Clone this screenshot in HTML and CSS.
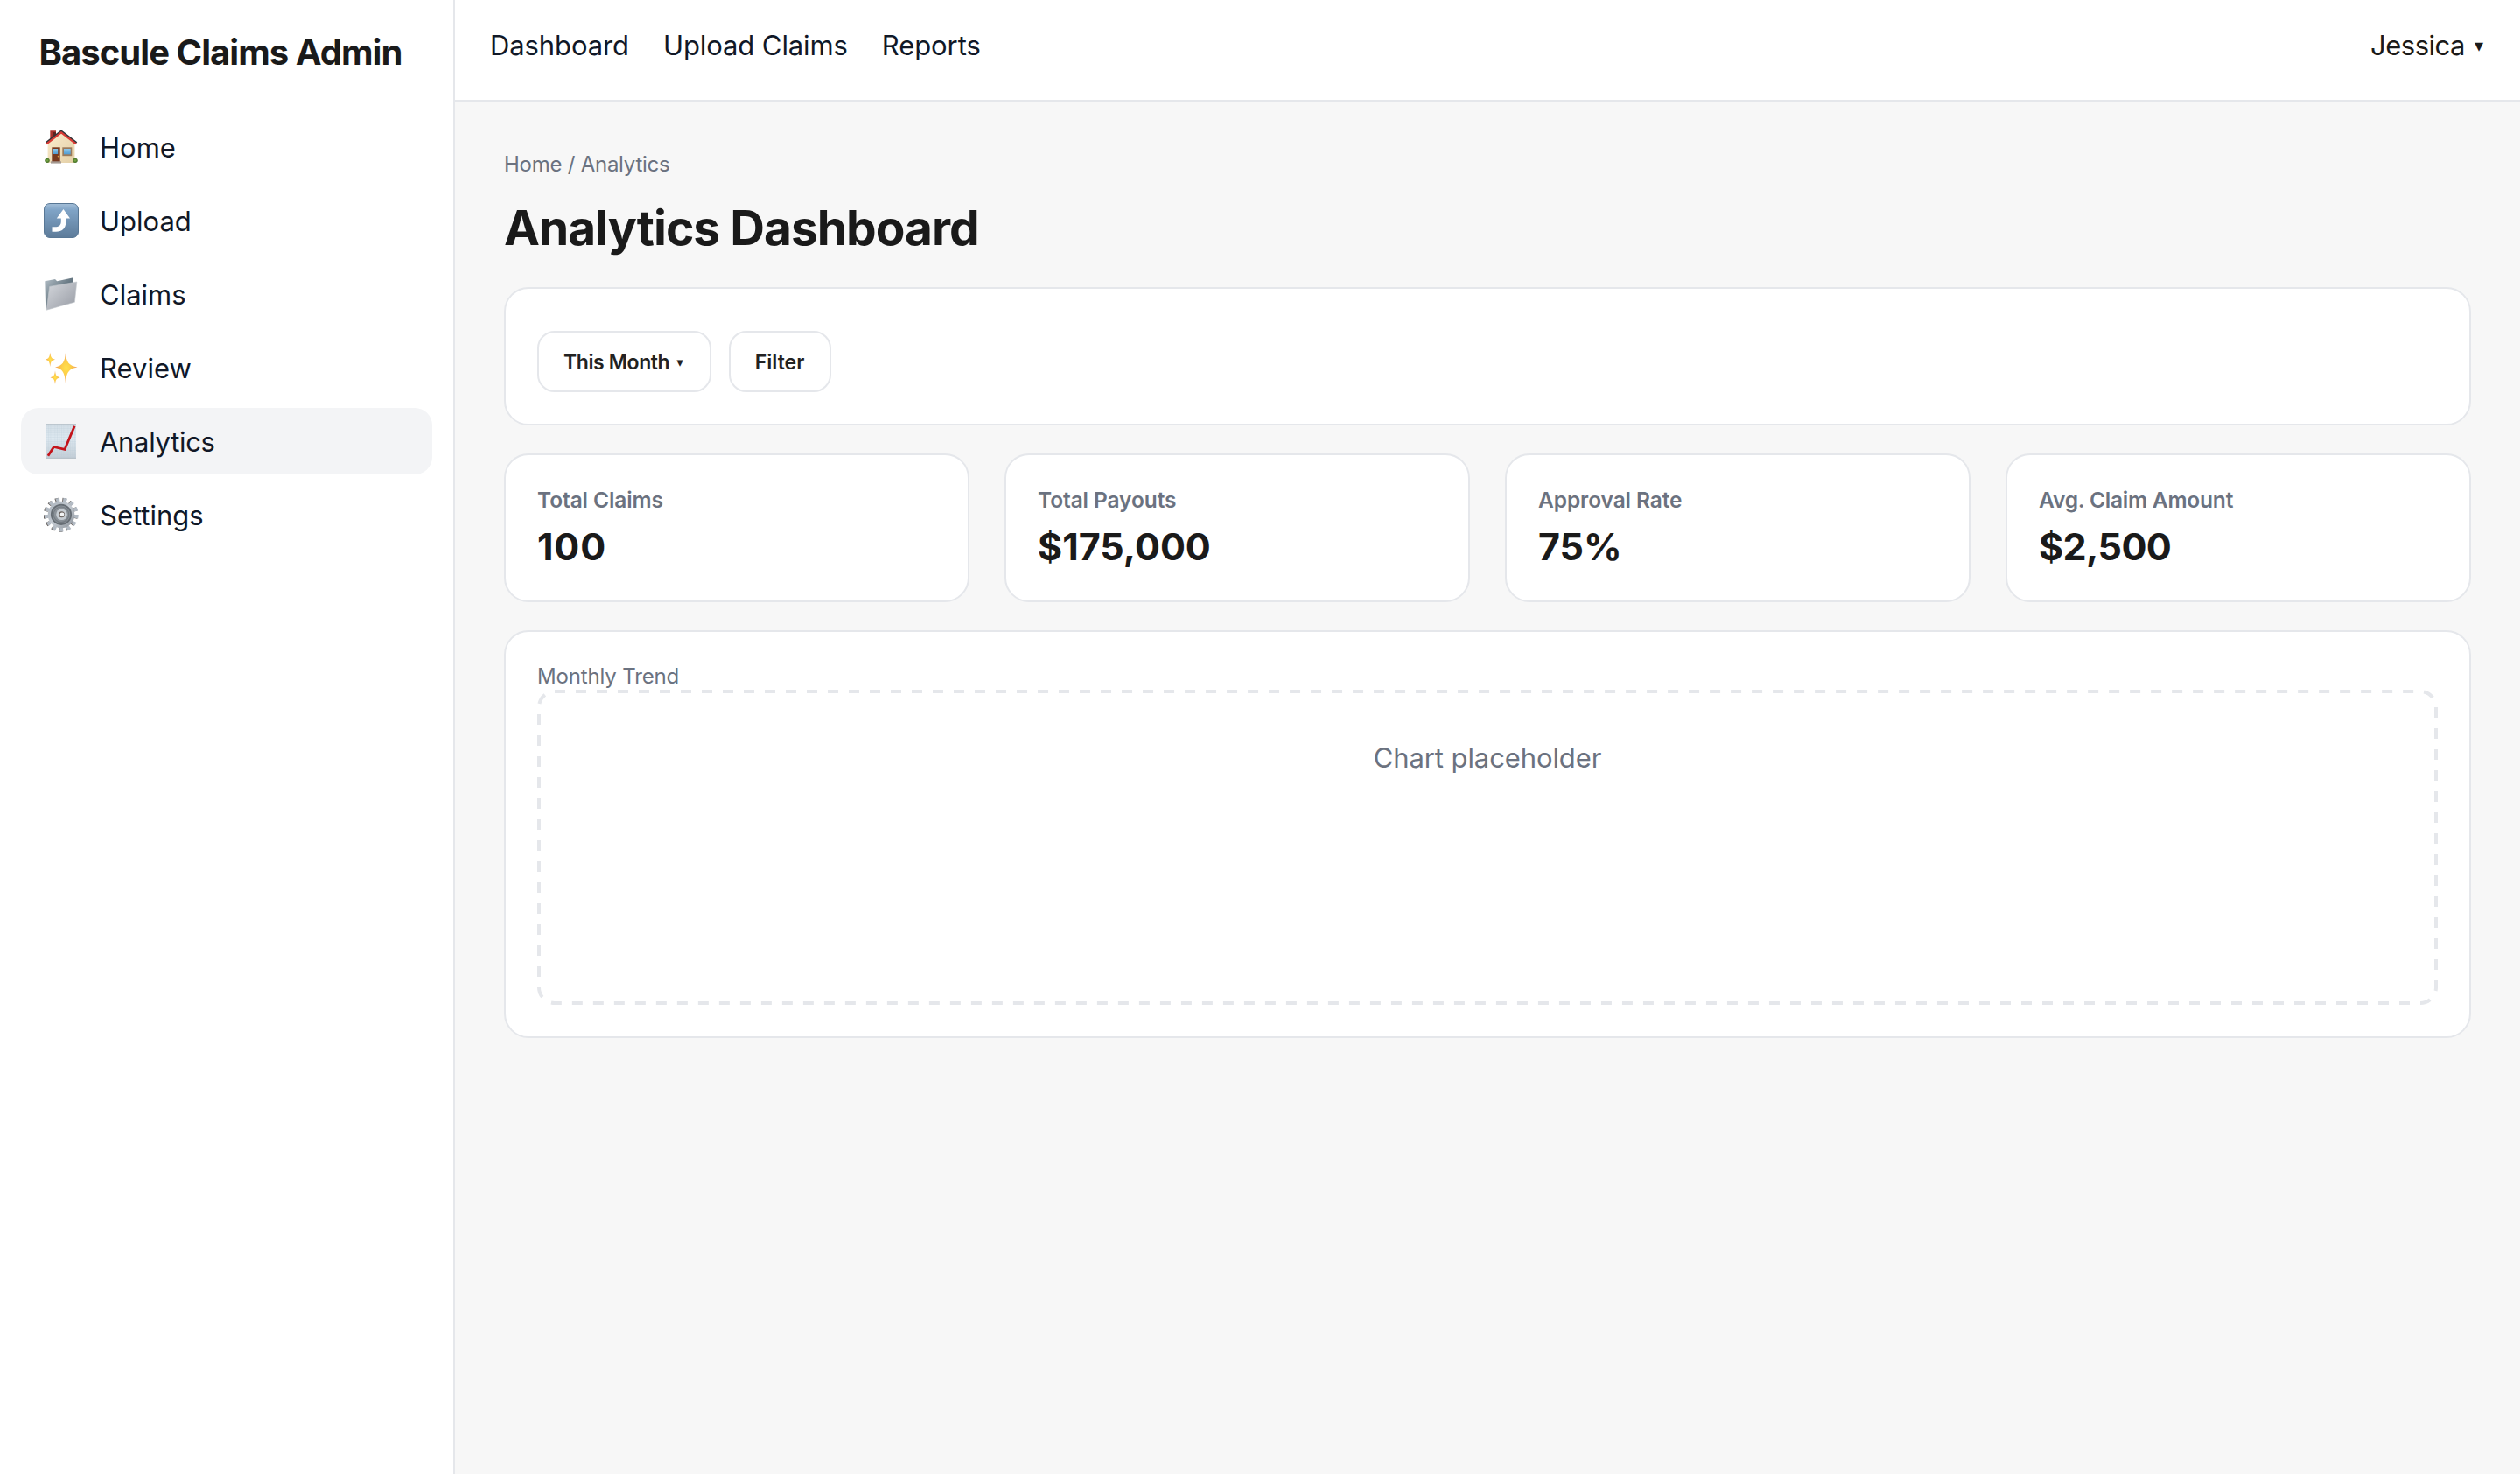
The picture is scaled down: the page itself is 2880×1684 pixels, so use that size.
FILE: index.html
```html
<!DOCTYPE html>
<html lang="en">
<head>
<meta charset="utf-8">
<title>Bascule Claims Admin</title>
<link rel="stylesheet" href="styles.css">
</head>
<body>
<div class="app">
  <aside class="sidebar">
    <div class="brand">Bascule Claims Admin</div>
    <nav class="side-nav">
      <a class="nav-item">
        <svg class="icon" viewBox="0 0 40 40">
          <defs>
            <linearGradient id="wall" x1="0" y1="0" x2="1" y2="1"><stop offset="0" stop-color="#fbeccd"/><stop offset="1" stop-color="#e3cfa6"/></linearGradient>
            <linearGradient id="pane" x1="0" y1="0" x2="0" y2="1"><stop offset="0" stop-color="#8cc8ec"/><stop offset="1" stop-color="#4f9bd2"/></linearGradient>
            <radialGradient id="bush"><stop offset="0" stop-color="#7fae4a"/><stop offset="1" stop-color="#3f6b22"/></radialGradient>
          </defs>
          <path d="M7.3 1.3H14V8L7.3 13.5Z" fill="#a8322b"/><path d="M10.5 3H14V8L9 12Z" fill="#5d2320"/>
          <path d="M4.6 14.5 20 3 35.4 14.5V38H4.6Z" fill="url(#wall)"/>
          <ellipse cx="4" cy="35.3" rx="2.7" ry="2.6" fill="url(#bush)"/><ellipse cx="36" cy="35.3" rx="2.7" ry="2.6" fill="url(#bush)"/>
          <path d="M2.7 15.3 20 1.7 37.5 15.3" fill="none" stroke="#30363b" stroke-width="2.4"/>
          <path d="M3.2 16.3 20 3.3 36.9 16.3" fill="none" stroke="#d93b35" stroke-width="2.2"/>
          <path d="M9.3 20.3H18.7V37H9.3Z" fill="#77391f"/><path d="M11 22H16.2V28H11Z" fill="url(#pane)"/><circle cx="16.6" cy="30.6" r=".9" fill="#dd9a3c"/>
          <path d="M8 36.3H20V38.6H8Z" fill="#a59a92"/>
          <path d="M21.3 20.3H32.3V30.2H21.3Z" fill="#9b7b5c"/><path d="M23 22H30.7V28.3H23Z" fill="url(#pane)"/>
        </svg>
        <span>Home</span>
      </a>
      <a class="nav-item">
        <svg class="icon" viewBox="0 0 40 40">
          <defs><linearGradient id="tile" x1="0" y1="0" x2="0" y2="1"><stop offset="0" stop-color="#a4bfd8"/><stop offset=".2" stop-color="#7fa3c6"/><stop offset="1" stop-color="#5d7b99"/></linearGradient></defs>
          <rect x=".5" y=".5" width="39" height="39" rx="6.5" fill="url(#tile)" stroke="#587795"/>
          <path d="M22.5 7 30 17.5H25.3V21.5C25.3 29 21 32.7 14 32.7H9.5V27.3H13C17.5 27.3 19.8 25 19.8 21V17.5H14.8Z" fill="#fff"/>
        </svg>
        <span>Upload</span>
      </a>
      <a class="nav-item">
        <svg class="icon" viewBox="0 0 40 40">
          <defs>
            <linearGradient id="front" x1="0" y1="0" x2="1" y2="1"><stop offset="0" stop-color="#d5d8dd"/><stop offset="1" stop-color="#969aa3"/></linearGradient>
            <linearGradient id="back" x1="0" y1="0" x2="1" y2="1"><stop offset="0" stop-color="#b6c1c9"/><stop offset=".5" stop-color="#667782"/><stop offset="1" stop-color="#46545e"/></linearGradient>
          </defs>
          <path d="M1.3 5.2 13 3 15.2 5.2 33.8 1.3V9L6 30 3 38 2.2 37.3Z" fill="url(#back)"/>
          <path d="M6.7 11.4 37.8 6 35.4 29.2 3.2 38.2Z" fill="url(#front)" stroke="#c3c7cd" stroke-width=".6"/>
        </svg>
        <span>Claims</span>
      </a>
      <a class="nav-item">
        <svg class="icon" viewBox="0 0 40 40">
          <defs><radialGradient id="spark"><stop offset="0" stop-color="#ffe14d"/><stop offset=".4" stop-color="#fdcf48"/><stop offset="1" stop-color="#ee9c5d"/></radialGradient></defs>
          <path d="M25 3C26 14 28.500 17.500 38.500 19.500C28.500 21.500 26 25 25 38C24 25 21.500 21.500 13 19.500C21.500 17.500 24 14 25 3Z" fill="url(#spark)"/>
          <path d="M7.300 2.500C7.900 8.200 8.800 9.700 13 10.700C8.800 11.700 7.900 13.200 7.300 19C6.700 13.200 5.800 11.700 2 10.700C5.800 9.700 6.700 8.200 7.300 2.500Z" fill="url(#spark)"/>
          <path d="M13 23.500C13.600 28.800 14.600 30.200 18.500 31.200C14.600 32.200 13.600 33.600 13 39C12.400 33.600 11.400 32.200 7.500 31.200C11.400 30.200 12.400 28.800 13 23.500Z" fill="url(#spark)"/>
        </svg>
        <span>Review</span>
      </a>
      <a class="nav-item active">
        <svg class="icon" viewBox="0 0 40 40">
          <defs>
            <linearGradient id="sheet" x1="0" y1="0" x2="0" y2="1"><stop offset="0" stop-color="#d3dee6"/><stop offset=".4" stop-color="#dde8f0"/><stop offset="1" stop-color="#c3cdd6"/></linearGradient>
            <pattern id="grid" width="2.500" height="2.500" patternUnits="userSpaceOnUse"><path d="M0 0H2.500M0 0V2.500" stroke="#b9cbd8" stroke-width=".4"/></pattern>
          </defs>
          <path d="M3 .3H37V39.800H3Z" fill="url(#sheet)"/><path d="M3 .3H37V39.800H3Z" fill="url(#grid)"/>
          <path d="M3 .8H37M3 39.300H37" stroke="#b3bdc5"/>
          <path d="M4.900 36.700 11.500 26.500 24 29.400 35.200 2.800" fill="none" stroke="#c4141b" stroke-width="2.800"/>
        </svg>
        <span>Analytics</span>
      </a>
      <a class="nav-item">
        <svg class="icon" viewBox="0 0 40 40">
          <defs><linearGradient id="steel" x1="0" y1="0" x2="1" y2="1"><stop offset="0" stop-color="#a9b2bb"/><stop offset=".5" stop-color="#c3c9d0"/><stop offset="1" stop-color="#888f97"/></linearGradient></defs>
          <circle cx="19.300" cy="20.200" r="17.300" fill="none" stroke="#66605c" stroke-width="4.600" pathLength="26" stroke-dasharray="1 1"/>
          <circle cx="20.200" cy="20" r="17.200" fill="none" stroke="#b3bbc4" stroke-width="4.600" pathLength="26" stroke-dasharray="1 1"/>
          <circle cx="20" cy="20" r="15.300" fill="url(#steel)"/>
          <circle cx="20" cy="19.800" r="11.200" fill="#8b9299" stroke="#666d74" stroke-width="1.800"/>
          <circle cx="20" cy="19.800" r="8.800" fill="none" stroke="#747b82" stroke-width="1.200"/>
          <circle cx="20.500" cy="19.800" r="6.300" fill="#c6ccd2"/>
          <circle cx="20.500" cy="19.800" r="3.500" fill="#6a625e"/>
          <circle cx="21" cy="19.800" r="2.400" fill="#f3f4f5"/>
        </svg>
        <span>Settings</span>
      </a>
    </nav>
  </aside>
  <div class="content">
    <header class="topbar">
      <nav class="top-links"><a>Dashboard</a><a>Upload Claims</a><a>Reports</a></nav>
      <div class="user">Jessica<span class="caret">▾</span></div>
    </header>
    <main class="page">
      <div class="breadcrumb">Home / Analytics</div>
      <h1 class="title">Analytics Dashboard</h1>
      <section class="card filters">
        <button class="btn month">This Month<span class="caret">▾</span></button>
        <button class="btn">Filter</button>
      </section>
      <section class="stats">
        <div class="card stat"><div class="stat-label">Total Claims</div><div class="stat-value loose">100</div></div>
        <div class="card stat"><div class="stat-label">Total Payouts</div><div class="stat-value">$175,000</div></div>
        <div class="card stat"><div class="stat-label">Approval Rate</div><div class="stat-value">75%</div></div>
        <div class="card stat"><div class="stat-label long">Avg. Claim Amount</div><div class="stat-value tight">$2,500</div></div>
      </section>
      <section class="card trend">
        <div class="trend-label">Monthly Trend</div>
        <div class="chart">
          <svg class="chart-outline" viewBox="0 0 2172 360"><rect x="2" y="2" width="2168" height="356" rx="18" pathLength="418"/></svg>
          Chart placeholder
        </div>
      </section>
    </main>
  </div>
</div>
</body>
</html>
```
FILE: styles.css
```css
* { box-sizing: border-box; }

body {
  margin: 0;
  background: #f7f7f7;
  color: #1a1a1a;
  font-family: Inter, "Liberation Sans", sans-serif;
  font-size: 31px;
}

.app {
  display: grid;
  grid-template-columns: 520px 1fr;
  min-height: 100vh;
}

/* Sidebar */
.sidebar {
  background: #fff;
  border-right: 2px solid #e5e7eb;
  padding: 35px 24px;
}

.brand {
  padding-left: 20.5px;
  margin-bottom: 46px;
  font-size: 40px;
  font-weight: 700;
  line-height: 49px;
  letter-spacing: -0.95px;
  white-space: nowrap;
}

.side-nav {
  display: flex;
  flex-direction: column;
  gap: 8px;
}

.nav-item {
  display: flex;
  align-items: center;
  gap: 24px;
  height: 76px;
  padding: 0 26px;
  border-radius: 20px;
  color: #111827;
  line-height: 77px;
}

.nav-item.active {
  background: #f3f4f6;
  letter-spacing: -0.3px;
}

.icon {
  width: 40px;
  height: 40px;
}

/* Top bar */
.topbar {
  display: flex;
  justify-content: space-between;
  height: 116px;
  padding: 28px 42px 0 40px;
  background: #fff;
  border-bottom: 2px solid #e5e7eb;
  line-height: 47px;
}

.top-links {
  display: flex;
  gap: 39px;
  color: #111827;
  letter-spacing: -0.1px;
}

.user { letter-spacing: -0.5px; }

.caret {
  display: inline-block;
  font-family: "DejaVu Sans", sans-serif;
  font-size: 20px;
  line-height: 1;
  letter-spacing: 0;
  vertical-align: 4px;
  margin-left: 11px;
}

/* Page */
.page { padding: 56px; }

.breadcrumb {
  font-size: 24px;
  line-height: 31px;
  letter-spacing: -0.25px;
  color: #6b7280;
}

.title {
  margin: 24px 0 35px;
  font-size: 55px;
  font-weight: 700;
  line-height: 66px;
  letter-spacing: -0.98px;
}

.card {
  background: #fff;
  border: 2px solid #e5e7eb;
  border-radius: 28px;
  padding: 36px;
}

.filters {
  display: flex;
  gap: 20px;
  padding-top: 48px;
}

.btn {
  height: 70px;
  padding: 2px 29px 0 28px;
  border: 2px solid #e5e7eb;
  border-radius: 20px;
  background: #fff;
  color: #222;
  font: 600 23px/64px Inter, sans-serif;
}

.month {
  padding-right: 30px;
  letter-spacing: -0.4px;
}

.month .caret {
  font-size: 15px;
  vertical-align: 3px;
  margin-left: 8px;
}

.stats {
  display: grid;
  grid-template-columns: repeat(4, 1fr);
  gap: 40px;
  margin: 32px 0;
}

.stat-label {
  margin-bottom: 12px;
  font-size: 24.5px;
  font-weight: 600;
  line-height: 30px;
  letter-spacing: -0.1px;
  color: #6b7280;
}

.stat-label.long { letter-spacing: -0.2px; }

.stat-value {
  font-size: 43px;
  font-weight: 700;
  line-height: 52px;
}

.stat-value.loose { letter-spacing: 0.8px; }
.stat-value.tight { letter-spacing: -0.6px; }

.trend-label {
  font-size: 24px;
  line-height: 30px;
  letter-spacing: -0.15px;
  color: #6b7280;
}

.chart {
  position: relative;
  height: 360px;
  padding-top: 54px;
  line-height: 47px;
  letter-spacing: -0.1px;
  text-align: center;
  color: #6b7280;
}

.chart-outline {
  position: absolute;
  inset: 0;
  width: 100%;
  height: 100%;
  fill: none;
  stroke: #e5e7eb;
  stroke-width: 4;
  stroke-dasharray: 1 1;
}
```
